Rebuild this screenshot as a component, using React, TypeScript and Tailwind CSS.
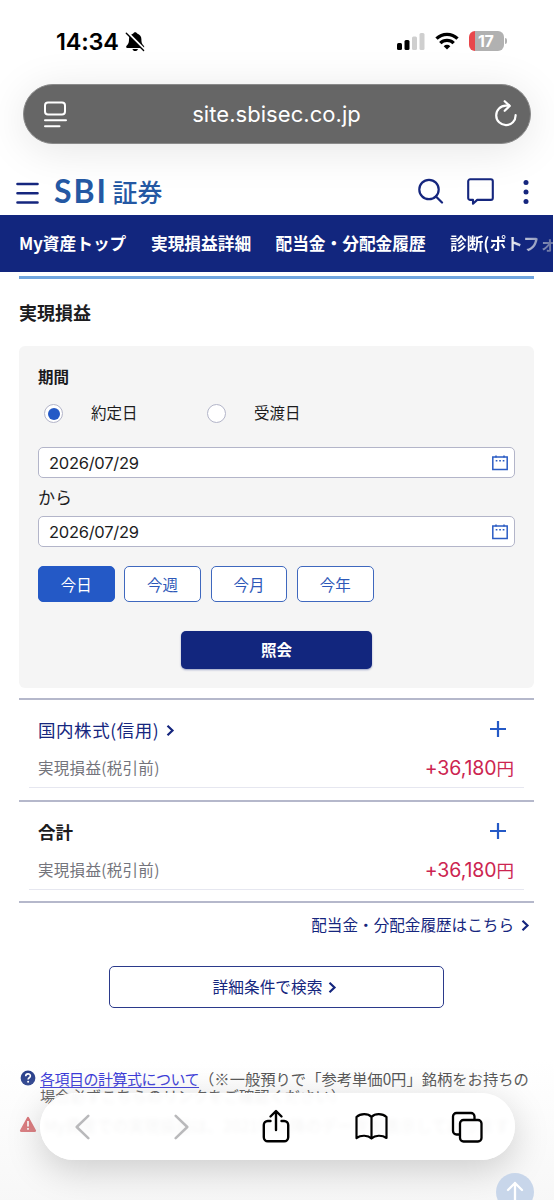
import React from "react";

const navItems = [
  { label: "My資産トップ", className: "ml-[19px] w-[132px] shrink-0" },
  { label: "実現損益詳細", className: "w-[124.500px] shrink-0" },
  { label: "配当金・分配金履歴", className: "w-[174.500px] shrink-0" },
];

const periods = ["今日", "今週", "今月", "今年"];

const StatusBar = () => (
  <div className="flex h-[84px] items-start pt-[29px] text-black">
    <span className="ml-[56px] w-[69px] font-[Inter] text-[23.500px] leading-[25px] font-semibold tracking-[-0.200px]">
      14:34
    </span>
    <svg className="mt-[2px] h-[22px] w-[21px]" viewBox="0 0 21 22">
      <path
        d="M10.200 1.200c-1 0-1.700.6-1.900 1.400C5.500 3.500 4 5.600 4 8.200c0 4-1 5-2.400 6.500-.8.8-.5 2.200.7 2.200h15.800c1.200 0 1.500-1.400.7-2.200-1.400-1.500-2.400-2.500-2.400-6.500 0-2.600-1.500-4.700-4.300-5.600-.2-.8-.9-1.400-1.900-1.400zM7.500 17.900h5.400c-.3 1.300-1.300 2.200-2.700 2.200s-2.400-.9-2.700-2.200z"
        fill="#000"
      />
      <path d="M2.400 1.600l17 17" stroke="#fff" strokeWidth="2.600" />
      <path d="M1.300 2.200l17.300 17.300" stroke="#000" strokeWidth="1.400" strokeLinecap="round" />
    </svg>
    <svg className="mt-[4px] ml-[251px] h-[18px] w-[28px]" viewBox="0 0 28 18">
      <rect x="0" y="10" width="5" height="7" rx="1.500" fill="#000" />
      <rect x="7.500" y="7" width="5" height="10" rx="1.500" fill="#000" />
      <rect x="15" y="3.500" width="5" height="13.500" rx="1.500" fill="#cfcfcf" />
      <rect x="22.500" y="0" width="5" height="17" rx="1.500" fill="#cfcfcf" />
    </svg>
    <svg className="mt-[3px] ml-[10px] h-[18px] w-[24px]" viewBox="0 0 24 18">
      <g fill="none" stroke="#000" strokeWidth="3.300">
        <path d="M1.500 6.700a14.900 14.900 0 0 1 21 0" />
        <path d="M5.300 11.200a9.500 9.500 0 0 1 13.400 0" />
      </g>
      <path d="M12 17.600l-3.300-3.400a4.700 4.700 0 0 1 6.600 0z" fill="#000" />
    </svg>
    <div className="mt-[2px] ml-[10px] flex h-[20px] w-[35px] overflow-hidden rounded-[6px] bg-linear-to-r from-[#e8474b] from-[6px] to-[#b1b1b1] to-[6px]">
      <span className="ml-[9px] font-[Inter] text-[16px] leading-[20px] font-bold tracking-[-0.300px] text-white">
        17
      </span>
    </div>
    <div className="mt-[9px] ml-[1px] h-[6px] w-[2px] rounded-r-full bg-[#b1b1b1]" />
  </div>
);

const AddressBar = () => (
  <div className="ml-[23px] flex h-[60px] w-[508px] items-center rounded-full border border-[#8a8a8a] bg-[#666] text-white shadow-[0_6px_44px_rgba(0,0,0,0.1)]">
    <svg className="ml-[20px] h-[27px] w-[23px]" viewBox="0 0 23 27" fill="none" stroke="#fff" strokeWidth="2">
      <rect x="1" y="1.500" width="20" height="12" rx="3" />
      <path d="M1 19.200h21M1 25.200h14.500" strokeLinecap="round" />
    </svg>
    <span className="flex-1 pr-[8px] text-center font-[Inter] text-[22px] tracking-[0.050px]">site.sbisec.co.jp</span>
    <svg className="mr-[12px] h-[28px] w-[24px]" viewBox="0 0 24 28" fill="none" stroke="#fff" strokeWidth="2.200" strokeLinecap="round" strokeLinejoin="round">
      <path d="M21.600 15.200a9.700 9.700 0 1 1-9.700-9.500h3.300" />
      <path d="M10.700 1.200l5 4.700-5 4.900" />
    </svg>
  </div>
);

const SiteHeader = () => (
  <header className="flex h-[71px] items-center pt-[24px] text-[#15267e]">
    <svg className="mt-[2px] ml-[16px] h-[24px] w-[23px]" viewBox="0 0 23 24" stroke="currentColor" strokeWidth="2.600" strokeLinecap="round">
      <path d="M1.500 3h20M1.500 12.200h20M1.500 21.500h20" />
    </svg>
    <div className="mb-[2px] ml-[15px] flex w-[364px] items-center leading-[30px] font-bold text-[#2458a3]">
      <span className="w-[58.500px] font-[Lato] text-[32px] tracking-[2px]">SBI</span>
      <span className="text-[25px] font-medium">証券</span>
    </div>
    <svg className="mb-px h-[26px] w-[26px]" viewBox="0 0 26 26" fill="none" stroke="currentColor" strokeWidth="2.200" strokeLinecap="round">
      <circle cx="11" cy="11.500" r="9.700" />
      <path d="M18 18.500l6 6" />
    </svg>
    <svg className="mb-[2px] ml-[23px] h-[28px] w-[27px]" viewBox="0 0 27 28" fill="none" stroke="currentColor" strokeWidth="2.100" strokeLinejoin="round">
      <path d="M3.200 2.300h20.600a2 2 0 0 1 2 2v16.600a2 2 0 0 1-2 2H10.200L6 26.700v-3.800H3.200a2 2 0 0 1-2-2V4.300a2 2 0 0 1 2-2z" />
    </svg>
    <svg className="ml-[29px] h-[26px] w-[6px]" viewBox="0 0 6 26" fill="currentColor">
      <circle cx="3" cy="3.500" r="2.500" />
      <circle cx="3" cy="13" r="2.500" />
      <circle cx="3" cy="22.500" r="2.500" />
    </svg>
  </header>
);

const Chevron = () => (
  <svg className="h-[13px] w-[9px]" viewBox="0 0 9 13" fill="none" stroke="#15267e" strokeWidth="2.200">
    <path d="M1.500 1.700l5 4.800-5 4.800" />
  </svg>
);

const DateField = ({ value }: { value: string }) => (
  <div className="flex h-[31px] items-center justify-between rounded-[5px] border-[1.500px] border-[#b3b5c9] bg-white pr-[6px] pl-[10px]">
    <span className="pt-px font-[Inter] text-[16.500px] tracking-[-0.270px] text-[#1c1c1e]">{value}</span>
    <svg className="h-[16px] w-[16px]" viewBox="0 0 16 16" fill="none" stroke="#2b5cc4">
      <path d="M.8 2h14.400v12.600H.8z" strokeWidth="1.500" />
      <path d="M4 .6v2M12 .6v2" strokeWidth="1.500" />
      <path d="M3.700 5.800h1.700M7.200 5.800h1.700M10.700 5.800h1.700" strokeWidth="1.400" />
    </svg>
  </div>
);

const Radio = ({ checked = false }: { checked?: boolean }) => (
  <span className="flex h-[19px] w-[19px] items-center justify-center rounded-full border-[1.500px] border-[#b3b5c9] bg-white">
    {checked && <span className="h-[12px] w-[12px] rounded-full bg-[#2459c6]" />}
  </span>
);

const SearchPanel = () => (
  <section className="mx-[19px] h-[342px] w-[515px] rounded-[6px] bg-[#f5f5f5] px-[19px] pt-[19px] text-[#1c1c1e]">
    <h3 className="text-[15.500px] leading-[23px] font-bold">期間</h3>
    <div className="mt-[14px] flex h-[23px] items-center pl-[6px] text-[15.500px]">
      <Radio checked />
      <span className="mb-px ml-[28px] w-[116px]">約定日</span>
      <Radio />
      <span className="mb-px ml-[28px]">受渡日</span>
    </div>
    <div className="mt-[22px] w-[477px]">
      <DateField value="2026/07/29" />
      <p className="h-[38px] text-[17px] leading-[38px]">から</p>
      <DateField value="2026/07/29" />
    </div>
    <div className="mt-[19px] flex gap-[9.600px]">
      {periods.map((period, i) => (
        <button
          key={period}
          className={
            i === 0
              ? "h-[36px] w-[76.700px] rounded-[5px] border border-[#2459c6] bg-[#2459c6] pt-px text-[15.500px] text-white"
              : "h-[36px] w-[76.700px] rounded-[5px] border border-[#3f68be] bg-white pt-px text-[15.500px] text-[#2d58b8]"
          }
        >
          {period}
        </button>
      ))}
    </div>
    <button className="mt-[29px] ml-[143px] block h-[38px] w-[191px] rounded-[5px] bg-[#12267e] text-[15.500px] font-bold text-white shadow-[0_1px_2px_rgba(18,38,126,0.4)]">
      照会
    </button>
  </section>
);

const ResultRow = ({ title, link = false }: { title: string; link?: boolean }) => (
  <div className="flex h-[101px] flex-col border-t-2 border-[#b5b8cb] px-[10px] pt-[17px] first:h-[102px]">
    <div className="flex h-[26px] items-center justify-between pr-[18px] pl-[9px]">
      {link ? (
        <a className="flex items-center gap-[7px] text-[17.500px] tracking-[0.550px] text-[#15267e]">
          {title}
          <Chevron />
        </a>
      ) : (
        <span className="text-[17.500px] font-bold text-[#1c1c1e]">{title}</span>
      )}
      <svg className="mb-[2px] h-[16px] w-[16px]" viewBox="0 0 16 16" stroke="#2459c6" strokeWidth="2.200">
        <path d="M0 8h16M8 0v16" />
      </svg>
    </div>
    <div className="mt-[12px] flex h-[33px] items-start justify-between border-b border-[#e6e7f0] pr-[10px] pl-[9px] leading-[24px]">
      <span className="text-[15.500px] tracking-[0.300px] text-[#74747c]">実現損益(税引前)</span>
      <span className="pt-px font-[Inter,'Noto_Sans_CJK_JP',sans-serif] text-[19.500px] tracking-[-0.080px] text-[#cc2450]">
        +36,180<span className="text-[17.500px]">円</span>
      </span>
    </div>
  </div>
);

const Notes = () => (
  <div className="mt-[62px] text-[15.300px] leading-[17px] text-[#4a4a4a]">
    <div className="flex">
      <svg className="ml-[20px] h-[16px] w-[16px]" viewBox="0 0 16 16">
        <circle cx="8" cy="8" r="7.400" fill="#1d3585" />
        <path d="M5.700 6.200c0-3.100 4.700-3.100 4.700-.2 0 1.800-2.300 1.700-2.300 3.500" fill="none" stroke="#fff" strokeWidth="1.600" />
        <circle cx="8.100" cy="11.700" r="1" fill="#fff" />
      </svg>
      <p className="ml-[4px] whitespace-nowrap">
        <a className="text-[15px] tracking-[-0.500px] text-[#2e2ed6] underline underline-offset-2">各項目の計算式について</a>
        （※一般預りで「参考単価0円」銘柄をお持ちの
        <br />
        場合必ずこちらのリンクをご確認ください）
      </p>
    </div>
    <div className="mt-[12px] flex">
      <svg className="ml-[19px] h-[17px] w-[18px]" viewBox="0 0 18 17">
        <path d="M9 2L16 14.800H2z" fill="#cf4348" stroke="#cf4348" strokeWidth="2.200" strokeLinejoin="round" />
        <path d="M9 5v5.500M9 12v1.800" stroke="#fff" strokeWidth="1.700" />
      </svg>
      <p className="ml-[7px] pt-px text-[15.800px] whitespace-nowrap">My資産での実現損益は、2021年以降のデータを表示しております</p>
    </div>
  </div>
);

const BottomToolbar = () => (
  <div className="absolute top-[1093px] left-[40px] flex h-[67px] w-[475px] items-center rounded-full border border-white bg-white/92 shadow-[0_10px_36px_rgba(0,0,0,0.18)] backdrop-blur-[2px]">
    <svg className="ml-[34px] h-[26px] w-[15px]" viewBox="0 0 15 26" fill="none" stroke="#b9b9bb" strokeWidth="2.500" strokeLinecap="round" strokeLinejoin="round">
      <path d="M13.300 1.800L1.700 13l11.600 11.200" />
    </svg>
    <svg className="ml-[84px] h-[26px] w-[15px]" viewBox="0 0 15 26" fill="none" stroke="#b9b9bb" strokeWidth="2.500" strokeLinecap="round" strokeLinejoin="round">
      <path d="M1.700 1.800L13.300 13 1.700 24.200" />
    </svg>
    <svg className="mb-[2px] ml-[73px] h-[34px] w-[28px]" viewBox="0 0 28 34" fill="none" stroke="#000" strokeWidth="2.400" strokeLinecap="round" strokeLinejoin="round">
      <path d="M8.500 12H5.800a4 4 0 0 0-4 4v12.300a4 4 0 0 0 4 4h16.400a4 4 0 0 0 4-4V16a4 4 0 0 0-4-4h-2.700" />
      <path d="M14 21V2.500M8.500 7.500L14 2l5.500 5.500" />
    </svg>
    <svg className="ml-[65px] h-[29px] w-[33px]" viewBox="0 0 33 29" fill="none" stroke="#000" strokeWidth="2.200" strokeLinecap="round" strokeLinejoin="round">
      <path d="M16.500 5v21.500c-3.500-3.400-10.500-3.700-15-.5V5c4-3.800 11.500-3.800 15 0zM16.500 5c3.500-3.800 11-3.800 15 0v21c-4.500-3.200-11.500-2.900-15 .5" />
    </svg>
    <svg className="ml-[63px] h-[32px] w-[32px]" viewBox="0 0 32 32" fill="none" stroke="#000" strokeWidth="2.300" strokeLinejoin="round">
      <rect x="9" y="9" width="21.500" height="21.500" rx="3.500" />
      <path d="M9 23.500H5.500a3.500 3.500 0 0 1-3.500-3.500V5.500A3.500 3.500 0 0 1 5.500 2H20a3.500 3.500 0 0 1 3.500 3.500V9" />
    </svg>
  </div>
);

const App = () => (
  <main className="relative h-[1200px] w-[554px] overflow-hidden bg-white font-['Noto_Sans_CJK_JP',sans-serif]">
    <StatusBar />
    <AddressBar />
    <SiteHeader />
    <nav className="relative flex h-[57px] w-[553px] items-center overflow-hidden bg-[#12267e] text-[16.700px] font-bold whitespace-nowrap text-white">
      {navItems.map(({ label, className }) => (
        <span key={label} className={className}>
          {label}
        </span>
      ))}
      <span className="shrink-0 bg-linear-to-r from-white from-[55px] to-[#65709f] to-[103px] bg-clip-text text-transparent">診断(ポトフォ</span>
    </nav>
    <div className="mt-[4px] ml-[19px] h-[3px] w-[515px] bg-[#70a5de]" />
    <h2 className="mt-[20px] mb-[21px] ml-[19px] text-[18px] leading-[26px] font-bold text-[#1c1c1e]">実現損益</h2>
    <SearchPanel />
    <section className="mx-[19px] mt-[10px] w-[515px] border-b-2 border-[#b5b8cb]">
      <ResultRow title="国内株式(信用)" link />
      <ResultRow title="合計" />
    </section>
    <a className="mt-[10px] mr-[24px] flex h-[24px] items-center justify-end gap-[7px] text-[15.600px] text-[#15267e]">
      配当金・分配金履歴はこちら
      <Chevron />
    </a>
    <button className="mt-[29px] ml-[109px] flex h-[42px] w-[335px] items-center justify-center gap-[6px] rounded-[5px] border-[1.500px] border-[#2b3a8b] bg-white pr-[3px] text-[15.700px] text-[#15267e]">
      詳細条件で検索
      <Chevron />
    </button>
    <Notes />
    <div className="absolute inset-x-0 bottom-0 h-[140px] bg-linear-to-b from-white/0 to-[#f4f4f4]/70" />
    <BottomToolbar />
    <button className="absolute top-[1173px] left-[496px] flex h-[38px] w-[38px] items-center justify-center rounded-full bg-[#c8d6ea]">
      <svg className="h-[22px] w-[18px]" viewBox="0 0 18 22" fill="none" stroke="#fff" strokeWidth="2.300" strokeLinecap="round" strokeLinejoin="round">
        <path d="M9 21V2M2 9l7-7 7 7" />
      </svg>
    </button>
  </main>
);

export default App;
